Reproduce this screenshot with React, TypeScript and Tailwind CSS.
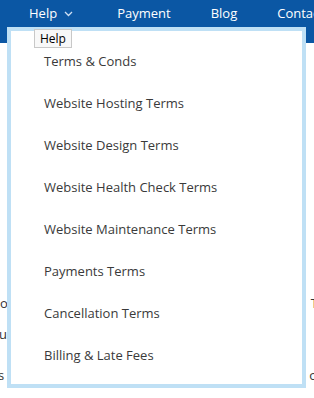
import React from "react";

const items = [
  "Terms & Conds",
  "Website Hosting Terms",
  "Website Design Terms",
  "Website Health Check Terms",
  "Website Maintenance Terms",
  "Payments Terms",
  "Cancellation Terms",
  "Billing & Late Fees",
];

export default function App() {
  return (
    <div
      className="relative w-[314px] h-[398px] overflow-hidden bg-white"
      style={{ fontFamily: '"Open Sans", "Noto Sans", sans-serif' }}
    >
      <nav className="h-[43px] bg-[#0b57a4] text-white text-[13px] leading-[20px] flex items-start pt-[3px] pl-[29px] whitespace-nowrap">
        <span className="flex items-center">
          Help
          <svg width="9" height="6" viewBox="0 0 9 6" className="ml-[7px] mt-[2px]" fill="none">
            <path d="M1 1l3.5 3.5L8 1" stroke="#cfe0f3" strokeWidth="1.3" />
          </svg>
        </span>
        <span className="ml-[44px]">Payment</span>
        <span className="ml-[40px]">Blog</span>
        <span className="ml-[40px]">Contact</span>
      </nav>

      <div className="text-[13px] leading-[20px] text-[#333] whitespace-nowrap">
        <div className="mt-[250px] flex justify-between">
          <span>ov</span>
          <span className="-mr-[4px]">T</span>
        </div>
        <div className="mt-[11px]">
          <span className="-ml-[1px]">us</span>
        </div>
        <div className="mt-[21px] flex justify-between">
          <span className="-ml-[2px]">s</span>
          <span className="-mr-[3px]">o</span>
        </div>
      </div>

      <div className="absolute left-[7px] top-[27px] w-[299px] h-[361px] border-4 border-[#bfe0f5] bg-white">
        <ul className="pt-[20px] text-[13px] leading-[20px] text-[#3a3a3a]">
          {items.map((t) => (
            <li key={t} className="h-[42px] pl-[33px] whitespace-nowrap">
              {t}
            </li>
          ))}
        </ul>
      </div>

      <div className="absolute left-[34px] top-[29px] h-[19px] px-[5px] border border-[#c8c8c8] bg-[#f8f8f8] text-[12px] leading-[17px] text-black">
        Help
      </div>
    </div>
  );
}
